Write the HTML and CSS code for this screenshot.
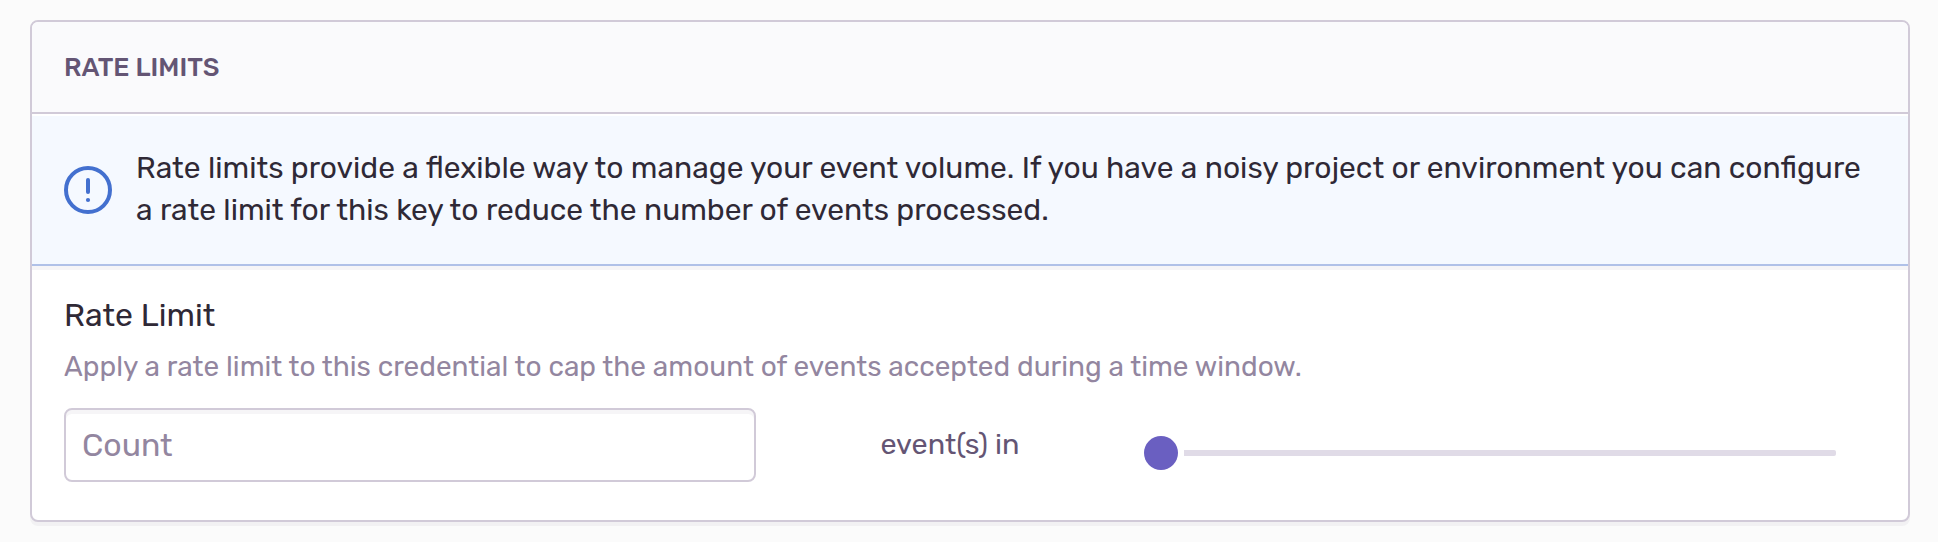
FILE: index.html
```html
<!DOCTYPE html>
<html lang="en">
<head>
<meta charset="utf-8">
<title>Rate Limits</title>
<link rel="stylesheet" href="styles.css">
</head>
<body>
<section class="panel">
  <header class="panel-header"><h2 class="panel-title">Rate Limits</h2></header>
  <div class="alert">
    <svg class="alert-icon" viewBox="0 0 48 48" fill="none" stroke="#4370cf" stroke-linecap="round" stroke-width="4">
      <circle cx="24" cy="24" r="22"/>
      <path d="M24 14v12"/>
      <circle cx="24" cy="34" r="2.1" fill="#4370cf" stroke="none"/>
    </svg>
    <p class="alert-text">Rate limits provide a flexible way to manage your event volume. If you have a noisy project or environment you can configure<br>a rate limit for this key to reduce the number of events processed.</p>
  </div>
  <div class="field">
    <label class="field-label" for="count">Rate Limit</label>
    <p class="field-help">Apply a rate limit to this credential to cap the amount of events accepted during a time window.</p>
    <div class="controls">
      <input class="count" id="count" type="text" placeholder="Count">
      <span class="between">event(s) in</span>
      <div class="slider"><span class="thumb"></span><span class="track"></span></div>
    </div>
  </div>
</section>
</body>
</html>
```
FILE: styles.css
```css
* { box-sizing: border-box; }
body {
  margin: 0;
  padding: 20px 28px 20px 30px;
  background: #fbfbfb;
  color: #2f2936;
  font-family: Rubik, Roboto, sans-serif;
}
.panel {
  height: 502px;
  border: 2px solid #d1cad8;
  border-radius: 8px;
  background: #fff;
  box-shadow: 0 4px 0 rgba(37, 11, 54, 0.04);
}
.panel-header {
  display: flex;
  align-items: center;
  height: 92px;
  padding: 1px 32px 0;
  border-bottom: 2px solid #d1cad8;
  border-radius: 6px 6px 0 0;
  background: #fafafc;
}
.panel-title {
  margin: 0;
  color: #645574;
  font-size: 26px;
  font-weight: 500;
  line-height: 30px;
  text-transform: uppercase;
}
.alert {
  display: flex;
  gap: 24px;
  height: 150px;
  margin-top: 2px;
  padding: 31px 32px;
  border-bottom: 2px solid #b0c1e8;
  background: #f5f9ff;
  box-shadow: 0 4px 0 rgba(37, 11, 54, 0.04);
}
.alert-icon { flex: none; width: 48px; height: 48px; margin-top: 19px; }
.alert-text {
  margin: 0;
  font-size: 30px;
  line-height: 42px;
  white-space: nowrap;
}
.field { padding: 28px 72px 0 32px; }
.field-label { display: block; font-size: 32px; line-height: 42px; }
.field-help {
  margin: 10px 0 21px;
  color: #9386a0;
  font-size: 28px;
  line-height: 41px;
  white-space: nowrap;
}
.controls { display: flex; height: 74px; }
.count {
  width: 692px;
  height: 74px;
  padding: 0 16px;
  border: 2px solid #d1cad8;
  border-radius: 8px;
  background: #fff;
  box-shadow: inset 0 4px 0 rgba(37, 11, 54, 0.04);
  font: inherit;
  font-size: 32px;
}
.count::placeholder { color: #9386a0; opacity: 1; }
.between {
  width: 388px;
  padding-left: 124.5px;
  color: #645574;
  font-size: 28.8px;
  line-height: 73px;
  white-space: nowrap;
}
.slider { display: flex; flex: 1; align-items: center; gap: 6px; height: 34px; margin-top: 28px; }
.thumb { width: 34px; height: 34px; border-radius: 50%; background: #6a5fc1; }
.track { flex: 1; height: 6px; border-radius: 0 2px 2px 0; background: #e0dbe7; }
```
